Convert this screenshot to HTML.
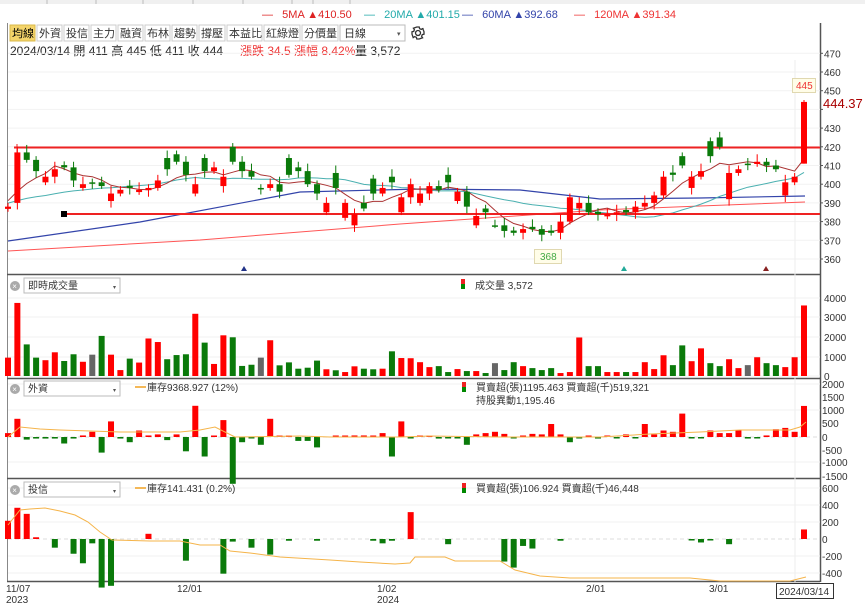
<!DOCTYPE html>
<html><head><meta charset="utf-8">
<style>
body{margin:0;width:865px;height:604px;overflow:hidden;background:#fff;font-family:"Liberation Sans","Noto Sans CJK TC",sans-serif;}
svg text{font-family:"Liberation Sans","Noto Sans CJK TC",sans-serif;}
</style></head><body>
<svg id="s" width="865" height="604" xmlns="http://www.w3.org/2000/svg" font-size="10">
<rect width="865" height="604" fill="#fff"/>
<rect x="0" y="0" width="865" height="4" fill="#f0f0f0"/>
<g stroke="#bbb"><line x1="47" y1="0" x2="47" y2="4"/><line x1="96" y1="0" x2="96" y2="4"/><line x1="143" y1="0" x2="143" y2="4"/><line x1="193" y1="0" x2="193" y2="4"/><line x1="243" y1="0" x2="243" y2="4"/><line x1="292" y1="0" x2="292" y2="4"/><line x1="313" y1="0" x2="313" y2="4"/><line x1="350" y1="0" x2="350" y2="4"/></g>
<g font-size="11">
<text x="262" y="18" fill="#d22">—&#160;&#160;&#160;5MA ▲410.50</text>
<text x="364" y="18" fill="#2aa">—&#160;&#160;&#160;20MA ▲401.15</text>
<text x="462" y="18" fill="#3344aa">—&#160;&#160;&#160;60MA ▲392.68</text>
<text x="574" y="18" fill="#e33">—&#160;&#160;&#160;120MA ▲391.34</text>
</g>
<line x1="7.5" y1="23" x2="7.5" y2="582" stroke="#888"/>
<g font-size="11">
<rect x="10" y="25" width="25" height="16" fill="#f4d46a" stroke="#d9b84a"/><text x="12" y="37">均線</text>
<rect x="37" y="25" width="25" height="16" fill="#fff" stroke="#ccc"/><text x="39" y="37" fill="#333">外資</text>
<rect x="64" y="25" width="25" height="16" fill="#fff" stroke="#ccc"/><text x="66" y="37" fill="#333">投信</text>
<rect x="91" y="25" width="25" height="16" fill="#fff" stroke="#ccc"/><text x="93" y="37" fill="#333">主力</text>
<rect x="118" y="25" width="25" height="16" fill="#fff" stroke="#ccc"/><text x="120" y="37" fill="#333">融資</text>
<rect x="145" y="25" width="25" height="16" fill="#fff" stroke="#ccc"/><text x="147" y="37" fill="#333">布林</text>
<rect x="172" y="25" width="25" height="16" fill="#fff" stroke="#ccc"/><text x="174" y="37" fill="#333">趨勢</text>
<rect x="199" y="25" width="26" height="16" fill="#fff" stroke="#ccc"/><text x="201" y="37" fill="#333">撐壓</text>
<rect x="227" y="25" width="35" height="16" fill="#fff" stroke="#ccc"/><text x="229" y="37" fill="#333">本益比</text>
<rect x="264" y="25" width="36" height="16" fill="#fff" stroke="#ccc"/><text x="266" y="37" fill="#333">紅綠燈</text>
<rect x="302" y="25" width="36" height="16" fill="#fff" stroke="#ccc"/><text x="304" y="37" fill="#333">分價量</text>
<rect x="340" y="25" width="65" height="16" fill="#fff" stroke="#bbb"/><text x="344" y="37" fill="#333">日線</text><text x="397" y="36" font-size="7" fill="#555">▾</text>
</g>
<g transform="translate(418,33)" fill="none" stroke="#333" stroke-width="1.3"><circle r="2.5"/><path d="M-1.2,-6 L1.2,-6 L1.6,-4.3 L3.3,-3.6 L4.8,-4.6 L4.6,-4.8 L6,-1.2 L6,1.2 L4.3,1.6 L3.6,3.3 L4.6,4.8 L1.2,6 L-1.2,6 L-1.6,4.3 L-3.3,3.6 L-4.8,4.6 L-6,1.2 L-6,-1.2 L-4.3,-1.6 L-3.6,-3.3 L-4.6,-4.8 Z"/></g>
<g font-size="12">
<text x="10" y="55" fill="#222">2024/03/14 開 411 高 445 低 411 收 444</text>
<text x="240" y="55" fill="#e33">漲跌 34.5 漲幅 8.42%</text>
<text x="355" y="55" fill="#222">量 3,572</text>
</g>
<g stroke="#555" stroke-width="1.5">
<line x1="7" y1="274.5" x2="820" y2="274.5"/>
<line x1="7" y1="378.5" x2="820" y2="378.5"/>
<line x1="7" y1="478.5" x2="820" y2="478.5"/>
<line x1="7" y1="581.5" x2="820" y2="581.5"/>
<line x1="820.5" y1="23" x2="820.5" y2="582"/>
</g>
<g id="g"></g>
<g font-size="10" fill="#333" id="ax"></g>
<g font-size="10">
<circle cx="15" cy="286" r="5" fill="#aaa"/><text x="12.3" y="289" fill="#fff" font-size="8">×</text>
<rect x="24" y="278" width="96" height="15" fill="#fff" stroke="#bbb"/><text x="28" y="289" fill="#333">即時成交量</text><text x="113" y="289" font-size="6" fill="#555">▾</text>
<rect x="461" y="279" width="4" height="5" fill="#e22"/><rect x="461" y="284" width="4" height="5" fill="#080"/>
<text x="475" y="289" fill="#333">成交量 3,572</text>
<circle cx="15" cy="389" r="5" fill="#aaa"/><text x="12.3" y="392" fill="#fff" font-size="8">×</text>
<rect x="24" y="381" width="96" height="15" fill="#fff" stroke="#bbb"/><text x="28" y="392" fill="#333">外資</text><text x="113" y="392" font-size="6" fill="#555">▾</text>
<line x1="135" y1="387" x2="146" y2="387" stroke="#f0a020" stroke-width="1.5"/><text x="147" y="391" fill="#333">庫存9368.927 (12%)</text>
<rect x="462" y="382" width="4" height="5" fill="#e22"/><rect x="462" y="387" width="4" height="5" fill="#080"/>
<text x="476" y="391" fill="#333">買賣超(張)1195.463 買賣超(千)519,321</text>
<text x="476" y="404" fill="#333">持股異動1,195.46</text>
<circle cx="15" cy="490" r="5" fill="#aaa"/><text x="12.3" y="493" fill="#fff" font-size="8">×</text>
<rect x="24" y="482" width="96" height="15" fill="#fff" stroke="#bbb"/><text x="28" y="493" fill="#333">投信</text><text x="113" y="493" font-size="6" fill="#555">▾</text>
<line x1="135" y1="488" x2="146" y2="488" stroke="#f0a020" stroke-width="1.5"/><text x="147" y="492" fill="#333">庫存141.431 (0.2%)</text>
<rect x="462" y="483" width="4" height="5" fill="#e22"/><rect x="462" y="488" width="4" height="5" fill="#080"/>
<text x="476" y="492" fill="#333">買賣超(張)106.924 買賣超(千)46,448</text>
</g>
<g font-size="10" fill="#333">
<text x="6" y="592">11/07</text><text x="6" y="603">2023</text>
<text x="177" y="592">12/01</text>
<text x="377" y="592">1/02</text><text x="377" y="603">2024</text>
<text x="586" y="592">2/01</text>
<text x="709" y="592">3/01</text>
<rect x="776.5" y="583.5" width="57" height="15" fill="#fff" stroke="#333"/><text x="779" y="595">2024/03/14</text>
</g>
<rect x="792.5" y="78.5" width="23" height="14" fill="#fffde8" stroke="#e0d8b0"/><text x="796" y="89" fill="#e33" font-size="10">445</text>
<text x="823" y="108" fill="#a00" font-size="13">444.37</text>
<rect x="534.5" y="249.5" width="27" height="14" fill="#fffde8" stroke="#e0d8b0"/><text x="540" y="260" fill="#4a4" font-size="10">368</text>
<polygon points="241,271 247,271 244,266" fill="#223388"/>
<polygon points="621,271 627,271 624,266" fill="#2a9"/>
<polygon points="763,271 769,271 766,266" fill="#822"/>
</svg>
<script>
var NS="http://www.w3.org/2000/svg",G=document.getElementById('g'),AX=document.getElementById('ax');
function el(t,a,p){var e=document.createElementNS(NS,t);for(var k in a)e.setAttribute(k,a[k]);(p||G).appendChild(e);return e;}
function txt(x,y,s,p,fill){var e=el('text',{x:x,y:y,fill:fill||'#333'},p);e.textContent=s;}
function Y(p){return 72+(460-p)*1.87;}
for(var p=360;p<=470;p+=10){var y=Y(p);el('line',{x1:8,y1:y,x2:820,y2:y,stroke:'#f2f2f2'});if(p!=440)txt(824,y+4,String(p),AX);el('line',{x1:820,y1:y,x2:823,y2:y,stroke:'#555'});}
[[4000,298],[3000,317],[2000,337],[1000,357],[0,376]].forEach(function(a){el('line',{x1:8,y1:a[1],x2:820,y2:a[1],stroke:'#f2f2f2'});txt(824,a[1]+4,String(a[0]),AX);});
[[2000,384],[1500,397],[1000,410],[500,423],[0,437],[-500,450],[-1000,462],[-1500,476]].forEach(function(a){if(a[0]%1000==0&&a[0]!=0)el('line',{x1:8,y1:a[1],x2:820,y2:a[1],stroke:'#f2f2f2'});txt(822,a[1]+4,String(a[0]),AX);});
[[600,488],[400,505],[200,522],[0,539],[-200,556],[-400,573]].forEach(function(a){if(a[0]!=0)el('line',{x1:8,y1:a[1],x2:820,y2:a[1],stroke:'#f2f2f2'});txt(822,a[1]+4,String(a[0]),AX);});
el('line',{x1:8,y1:437,x2:820,y2:437,stroke:'#ddd','stroke-dasharray':'4 3'});
el('line',{x1:8,y1:539,x2:820,y2:539,stroke:'#ddd','stroke-dasharray':'4 3'});
el('line',{x1:795,y1:60,x2:795,y2:582,stroke:'#eee'});
var vol=[930,3700,1600,930,800,1200,760,1100,720,1080,2030,1080,300,880,680,1900,1720,850,1060,1100,3150,1690,610,2060,1960,510,570,930,1810,540,690,370,420,780,340,290,200,490,370,340,370,1250,910,
900,700,450,500,200,350,250,250,150,650,300,700,500,400,300,400,150,200,1950,500,500,200,200,200,200,700,350,1050,550,1550,750,1400,650,500,850,400,550,950,650,550,450,950,3572];
var col=new Array(86);
var cc={0:'r',1:'r',2:'g',3:'g',4:'r',5:'r',6:'g',7:'g',8:'r',9:'x',10:'g',11:'r',12:'r',13:'g',14:'r',15:'r',16:'r',17:'g',18:'g',19:'g',20:'r',21:'g',22:'r',23:'r',24:'g',25:'g',26:'g',27:'x',28:'r',29:'g',30:'g',31:'g',32:'g',33:'g',34:'r',35:'g',36:'r',37:'r',38:'g',39:'g',40:'r',41:'g',42:'r'};
for(var k in cc)col[k]=cc[k];
var rcol="rrrggrgrgxggrgggrrrggrrgrrrrggrrggrrxrggrrr".split('');
for(var i=0;i<43;i++)col[43+i]=rcol[i];
var c=[388,417,413,407,404,408,409,402,400,401,399,395,397,398,397,398,402,408,412,405,400,407,409,404,412,407,404,398,400,396,405,407,400,395,390,398,390,384,387,395,398,401,393,400,395,399,397,401,396,388,383,385,378,375,374,376,376,373,374,380,393,390,385,384,384,385,385,388,390,394,404,405,410,404,407,415,420,406,408,411,412,410,408,401,404,444];
var N=86,X0=8,DX=(804-8)/85;
function X(i){return X0+i*DX;}
var RED='#f00',GRN='#0a7a0a',GRY='#666';
function C(k){return k=='r'?RED:(k=='g'?GRN:GRY);}
function ma(n,pad){var o=[];for(var i=0;i<N;i++){var s=0;for(var j=i-n+1;j<=i;j++)s+=(j<0?pad:(c[j]||c[c.length-1]));o.push(s/n);}return o;}
function line(arr,stroke,w){var d='';arr.forEach(function(v,i){d+=(i?'L':'M')+X(i).toFixed(1)+' '+Y(v).toFixed(1);});el('path',{d:d,fill:'none',stroke:stroke,'stroke-width':w||1});}
el('path',{d:'M8 241 L140 222 L300 192 L420 189 L520 190 L600 199 L700 198 L805 196',fill:'none',stroke:'#3344aa','stroke-width':1.2});
el('path',{d:'M8 251 L200 240 L400 224 L600 210 L700 206 L805 202',fill:'none',stroke:'#f55','stroke-width':1});
line(ma(20,390),'#4ab0b0',1);
line(ma(5,392),'#a33',1);
el('line',{x1:14,y1:147.5,x2:820,y2:147.5,stroke:'#e22','stroke-width':2});
el('line',{x1:64,y1:214,x2:820,y2:214,stroke:'#e22','stroke-width':2});
el('rect',{x:61,y:211,width:6,height:6,fill:'#000'});
el('line',{x1:17,y1:144,x2:17,y2:160,stroke:'#e22'});
for(var i=0;i<N;i++){var cl=c[i]!==undefined?c[i]:c[c.length-1],pc=i?(c[i-1]||cl):cl;var k=col[i];var body=Math.max(Math.abs(cl-pc),1.2);var o;
 if(i==N-1){o=411;}else if(k=='r'){o=cl-body;}else if(k=='g'){o=cl+body;}else o=cl;
 if(i==1)o=390;
 var hi=Math.max(o,cl)+2+(i%3),lo=Math.min(o,cl)-1.5-(i%2)*2;if(i==N-1){hi=445;lo=411;}
 var x=X(i),colr=C(k=='x'?'g':k);
 el('line',{x1:x,y1:Y(hi),x2:x,y2:Y(lo),stroke:colr});
 var t=Y(Math.max(o,cl)),b=Y(Math.min(o,cl));el('rect',{x:x-3,y:t,width:6,height:Math.max(b-t,1.5),fill:colr});
}
for(var i=0;i<N;i++){var h=vol[i]*79/4000;el('rect',{x:X(i)-3,y:376-h,width:6,height:h,fill:C(col[i])});}
var fa={0:150,1:700,2:-100,3:-60,4:-60,5:-60,6:-250,7:-60,8:60,9:200,10:-600,11:600,12:-60,13:-200,14:250,15:60,16:100,17:-120,18:100,19:-550,20:1200,21:-750,22:30,23:650,24:-1800,25:-200,26:-50,27:-300,28:700,29:40,30:40,31:-150,32:-150,33:-400,35:30,36:50,37:60,38:60,39:40,40:150,41:-750,42:600,43:-40,44:50,45:50,46:-60,47:-40,48:-30,49:-300,50:100,51:150,52:200,53:120,54:-20,55:40,56:120,57:100,58:500,59:100,60:-200,61:-20,62:30,63:-60,64:50,65:-40,66:100,67:-20,68:500,69:100,70:250,71:200,72:900,73:-30,74:-30,75:250,76:150,77:150,78:250,79:-60,80:-50,81:60,82:300,83:350,84:200,85:1195};
for(var i=0;i<N;i++){var v=fa[i];if(v===undefined)continue;var h=Math.abs(v)*0.026;if(h<1.5)h=1.5;el('rect',{x:X(i)-3,y:v>0?437-h:437,width:6,height:h,fill:v>0?RED:GRN});}
el('path',{d:'M8 437 L20 427 L40 429 L60 430 L120 432 L180 432 L200 430 L215 427 L235 437 L300 436 L330 437 L400 437 L430 436 L500 437 L560 437 L600 437 L650 434 L700 432 L740 430 L790 430 L800 427 L806 422',fill:'none',stroke:'#f5b44a','stroke-width':1});
var tx={0:210,1:360,2:290,3:20,5:-100,7:-170,8:-280,9:-50,10:-560,11:-540,15:60,19:-250,23:-400,24:-30,26:-100,28:-180,30:-20,33:-20,39:-20,40:-50,41:-20,43:310,47:-60,53:-260,54:-330,55:-80,56:-110,59:-20,73:-10,74:-40,75:-10,77:-60,85:110};
for(var i=0;i<N;i++){var v=tx[i];if(v===undefined)continue;var h=Math.abs(v)*0.0867;if(h<1.5)h=1.5;el('rect',{x:X(i)-3,y:v>0?539-h:539,width:6,height:h,fill:v>0?RED:GRN});}
el('path',{d:'M8 525 L20 510 L30 509 L45 508 L60 511 L75 515 L88 522 L100 532 L112 540 L150 541 L180 541 L200 545 L220 545 L230 551 L250 553 L280 557 L330 560 L360 562 L395 564 L410 563 L415 557 L445 557 L455 561 L500 561 L515 570 L540 576 L570 578 L690 578 L720 581 L790 581 L806 577',fill:'none',stroke:'#f5b44a','stroke-width':1});
</script>
</body></html>
